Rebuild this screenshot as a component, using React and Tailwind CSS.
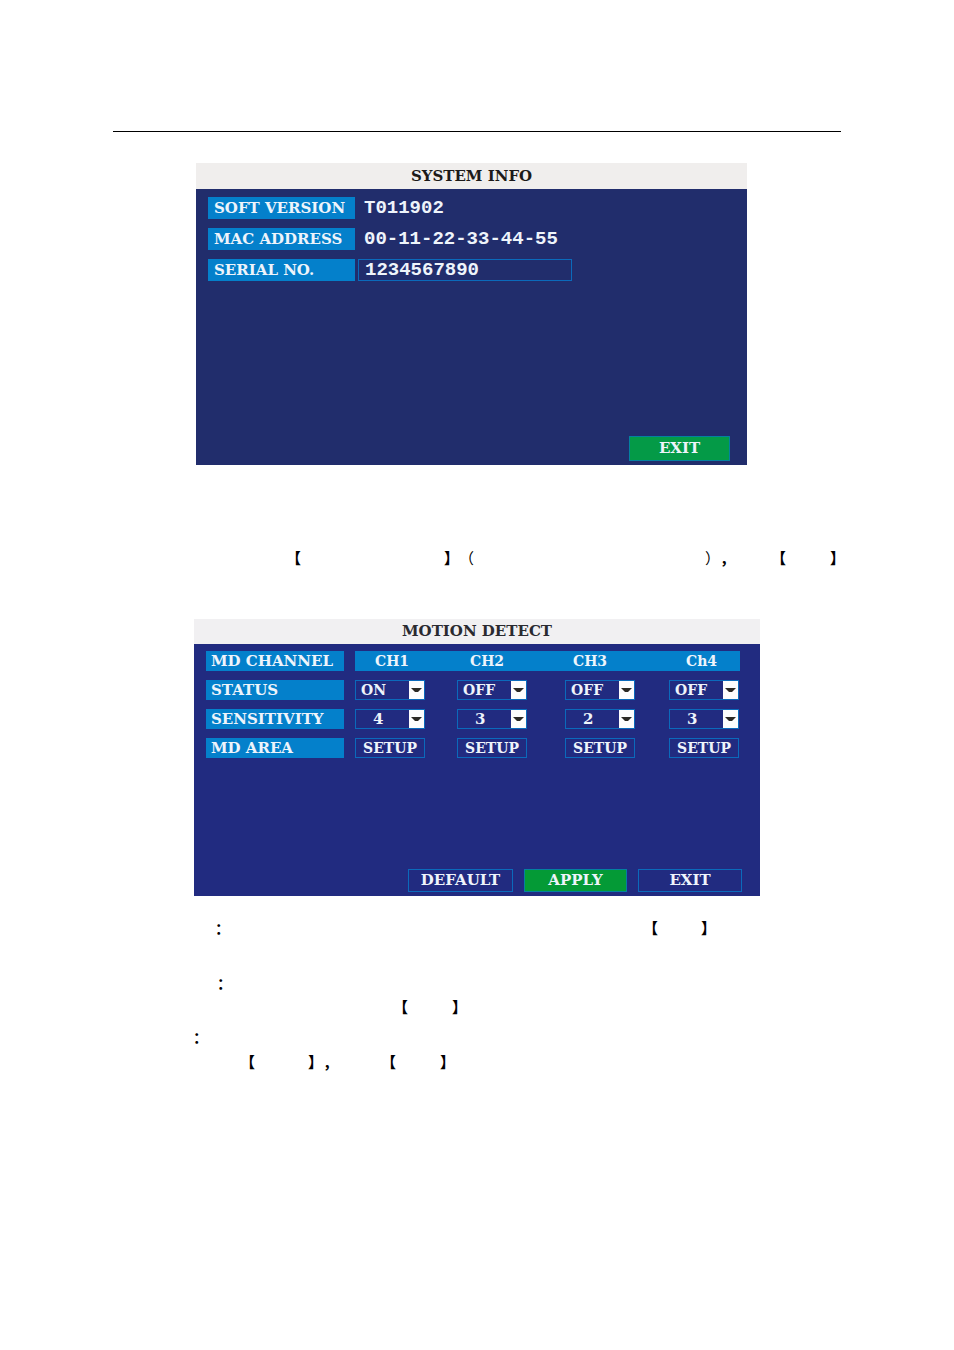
import React, { useState } from "react";

const channels = [
  { name: "CH1", status: "ON", sensitivity: "4" },
  { name: "CH2", status: "OFF", sensitivity: "3" },
  { name: "CH3", status: "OFF", sensitivity: "2" },
  { name: "Ch4", status: "OFF", sensitivity: "3" },
];

function Label({ children, htmlFor, className = "" }) {
  return (
    <label
      htmlFor={htmlFor}
      className={`block bg-[#0480cb] whitespace-nowrap ${className}`}
    >
      {children}
    </label>
  );
}

function DropDown({ label, options, value, onChange, className = "" }) {
  return (
    <div className="relative w-[70px]">
      <select
        aria-label={label}
        value={value}
        onChange={(e) => onChange(e.target.value)}
        className={`block w-full h-5 appearance-none border border-[#0b6abb] bg-transparent leading-[18px] ${className}`}
      >
        {options.map((o) => (
          <option key={o}>{o}</option>
        ))}
      </select>
      <svg
        viewBox="0 0 15 18"
        className="pointer-events-none absolute right-px top-px w-[15px] h-[18px]"
      >
        <rect width="15" height="18" fill="#fdfdfd" />
        <path d="M2 7h11l-4 4h-3z" fill="#2b2924" />
      </svg>
    </div>
  );
}

// Linha do texto, só com a pontuação
function Line({ children, className = "" }) {
  return (
    <p
      className={`flex whitespace-nowrap font-['Noto_Sans_CJK_SC',sans-serif] text-[15px] leading-5 text-black ${className}`}
    >
      {children}
    </p>
  );
}

function SystemInfo() {
  const [serial, setSerial] = useState("1234567890");

  return (
    <section className="ml-[83px] mt-[31px] max-w-[551px] bg-[#212d6c] text-[#eef4fb]">
      <h2 className="bg-[#f0eeed] text-center leading-[26px] text-[#1c1a19]">
        SYSTEM INFO
      </h2>
      <div className="grid grid-cols-[147px_214px] gap-x-[3px] gap-y-[9px] pl-3 pt-2 leading-[22px]">
        <Label className="pl-[6px]">SOFT VERSION</Label>
        <span className="pl-[6px] font-['Liberation_Mono',monospace] text-[19px]">
          T011902
        </span>
        <Label className="pl-[6px]">MAC ADDRESS</Label>
        <span className="pl-[6px] font-['Liberation_Mono',monospace] text-[19px]">
          00-11-22-33-44-55
        </span>
        <Label htmlFor="serial" className="pl-[6px]">
          SERIAL NO.
        </Label>
        <input
          id="serial"
          value={serial}
          onChange={(e) => setSerial(e.target.value)}
          className="h-[22px] w-full border border-[#0b6abb] bg-transparent pl-[6px] font-['Liberation_Mono',monospace] text-[19px]"
        />
      </div>
      <div className="flex justify-end pb-1 pr-[17px] pt-[155px]">
        <button className="h-[25px] w-[101px] border border-[#0480a0] bg-[#049a47] leading-[23px]">
          EXIT
        </button>
      </div>
    </section>
  );
}

function MotionDetect() {
  const [rows, setRows] = useState(channels);

  const update = (index, field, value) => {
    setRows(rows.map((r, i) => (i === index ? { ...r, [field]: value } : r)));
  };

  return (
    <section className="ml-[81px] mt-[51px] max-w-[566px] bg-[#212b80] text-[#eef4fb]">
      <h2 className="bg-[#f1f0f2] text-center leading-[25px] text-[#2a2a30]">
        MOTION DETECT
      </h2>
      <div className="grid grid-cols-[138px_385px] gap-x-[11px] gap-y-[9px] pl-3 pt-[7px] leading-5">
        <Label className="pl-[5px]">MD CHANNEL</Label>
        <div className="grid grid-cols-[95px_103px_113px_auto] bg-[#0480cb] pl-5 text-sm leading-5">
          {rows.map((r) => (
            <span key={r.name}>{r.name}</span>
          ))}
        </div>

        <Label className="pl-[5px]">STATUS</Label>
        <div className="grid grid-cols-[102px_108px_104px_auto] text-sm">
          {rows.map((r, i) => (
            <DropDown
              key={r.name}
              label={`${r.name} status`}
              options={["ON", "OFF"]}
              value={r.status}
              onChange={(v) => update(i, "status", v)}
              className="pl-[5px]"
            />
          ))}
        </div>

        <Label className="pl-[5px]">SENSITIVITY</Label>
        <div className="grid grid-cols-[102px_108px_104px_auto]">
          {rows.map((r, i) => (
            <DropDown
              key={r.name}
              label={`${r.name} sensitivity`}
              options={["1", "2", "3", "4"]}
              value={r.sensitivity}
              onChange={(v) => update(i, "sensitivity", v)}
              className="pl-[17px]"
            />
          ))}
        </div>

        <Label className="pl-[5px]">MD AREA</Label>
        <div className="grid grid-cols-[102px_108px_104px_auto] text-sm">
          {rows.map((r) => (
            <button
              key={r.name}
              className="h-5 w-[70px] border border-[#0b6abb] leading-[18px]"
            >
              SETUP
            </button>
          ))}
        </div>
      </div>
      <div className="flex justify-end gap-[11px] pb-1 pr-[18px] pt-[111px] leading-[21px]">
        <button className="h-[23px] w-[105px] border border-[#0b6abb]">
          DEFAULT
        </button>
        <button className="h-[23px] w-[103px] border border-[#0480a0] bg-[#049a36]">
          APPLY
        </button>
        <button className="h-[23px] w-[104px] border border-[#0b6abb]">
          EXIT
        </button>
      </div>
    </section>
  );
}

export default function App() {
  return (
    <main className="bg-white px-[113px] pt-[131px] font-['DejaVu_Serif',serif] text-[15px] font-bold">
      <hr className="border-t border-black" />

      <SystemInfo />

      <Line className="mt-[83px]">
        <span className="ml-[173px]">【</span>
        <span className="ml-[143px]">】</span>
        <span className="font-normal">（</span>
        <span className="ml-[231px] font-normal">）</span>
        <span>，</span>
        <span className="ml-[36px]">【</span>
        <span className="ml-[44px]">】</span>
      </Line>

      <MotionDetect />

      <Line className="mt-[22px]">
        <span className="ml-[102px]">：</span>
        <span className="ml-[413px]">【</span>
        <span className="ml-[43px]">】</span>
      </Line>
      <Line className="mt-[35px]">
        <span className="ml-[104px]">：</span>
      </Line>
      <Line className="mt-1">
        <span className="ml-[280px]">【</span>
        <span className="ml-[44px]">】</span>
      </Line>
      <Line className="mt-[10px]">
        <span className="ml-[80px]">：</span>
      </Line>
      <Line className="mt-[5px]">
        <span className="ml-[127px]">【</span>
        <span className="ml-[53px]">】</span>
        <span>，</span>
        <span className="ml-[43px]">【</span>
        <span className="ml-[44px]">】</span>
      </Line>
    </main>
  );
}
